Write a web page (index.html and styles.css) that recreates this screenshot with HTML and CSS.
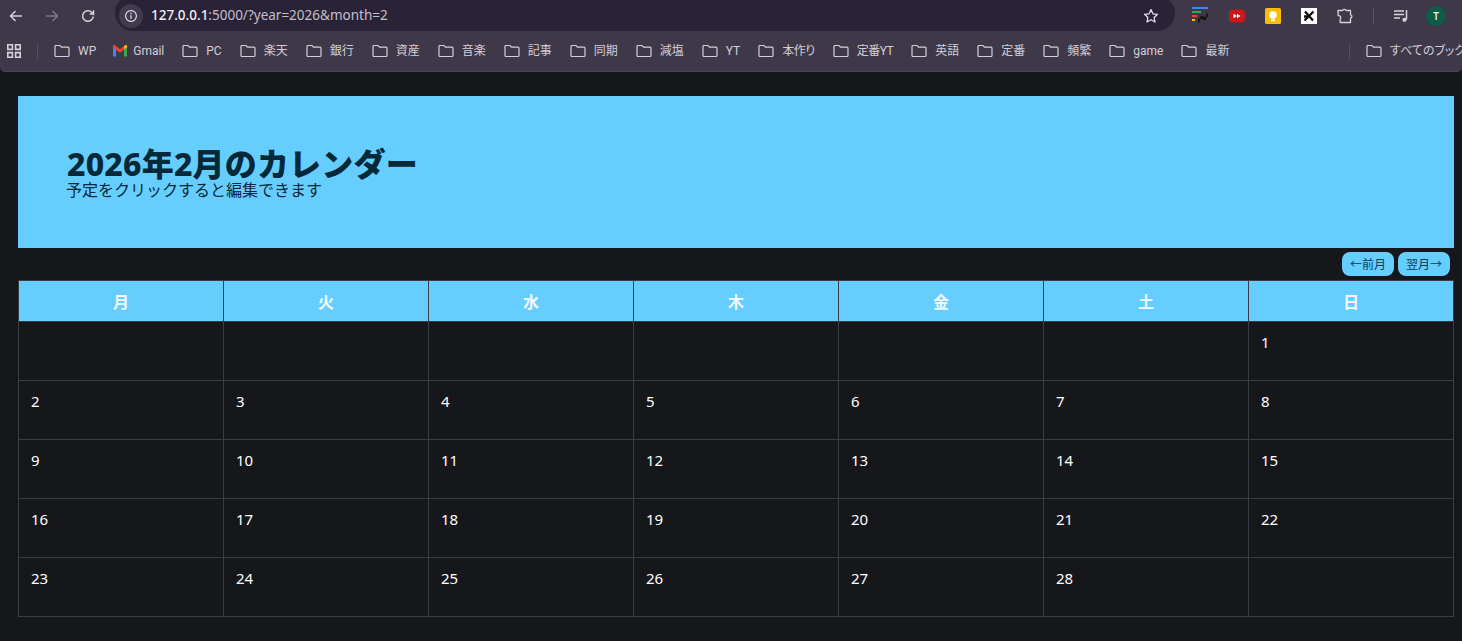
FILE: index.html
```html
<!DOCTYPE html>
<html lang="ja">
<head>
    <meta charset="UTF-8">
    <meta name="viewport" content="width=device-width, initial-scale=1.0">
    <title>カレンダー</title>
    <link rel="stylesheet" href="styles.css">
</head>
<body>

<svg class="defs" width="0" height="0">
    <symbol id="folder" viewBox="0 0 16 16">
        <path d="M1 3.5a1 1 0 0 1 1-1h4l1.5 1.7H14a1 1 0 0 1 1 1v7.3a1 1 0 0 1-1 1H2a1 1 0 0 1-1-1z" fill="none" stroke="currentColor" stroke-width="1.2"/>
    </symbol>
</svg>

<div class="browser">
    <div class="toolbar">
        <div class="nav-buttons">
            <svg class="nav-icon" viewBox="0 0 16 16"><path d="M14 8H3M7.5 3 2.5 8l5 5" fill="none" stroke="currentColor" stroke-width="1.5"/></svg>
            <svg class="nav-icon dim" viewBox="0 0 16 16"><path d="M2 8h11M8.5 3l5 5-5 5" fill="none" stroke="currentColor" stroke-width="1.5"/></svg>
            <svg class="nav-icon" viewBox="0 0 16 16"><path d="M13.2 8.5a5.3 5.3 0 1 1-1.4-4.1L13.5 6V2.2M13.5 6H9.8" fill="none" stroke="currentColor" stroke-width="1.5"/></svg>
        </div>
        <div class="omnibox">
            <span class="info-chip">
                <svg class="info-icon" viewBox="0 0 16 16">
                    <circle cx="8" cy="8" r="6.2" fill="none" stroke="currentColor" stroke-width="1.3"/>
                    <path d="M8 7v4.2M8 4.4v1.5" stroke="currentColor" stroke-width="1.4"/>
                </svg>
            </span>
            <span class="url"><b>127.0.0.1</b>:5000/?year=2026&amp;month=2</span>
            <svg class="star" viewBox="0 0 16 16"><path d="m8 1.600 1.900 4.200 4.600.5-3.400 3.100.9 4.600-4-2.300-4 2.300.9-4.600L1.500 6.300l4.600-.5z" fill="none" stroke="currentColor" stroke-width="1.300" stroke-linejoin="round"/></svg>
        </div>
        <div class="extensions">
            <svg class="ext ext-link" viewBox="0 0 18 18">
                <rect x="0" y="0" width="16" height="2" fill="#4285f4"/>
                <rect x="0" y="4" width="9" height="2" fill="#34a853"/>
                <rect x="0" y="8" width="5" height="2" fill="#ea4335"/>
                <rect x="0" y="12" width="3" height="2" fill="#fbbc04"/>
                <path d="M7.500 15.500a2.300 2.300 0 0 1-.2-3.200l2-2a2.300 2.300 0 0 1 3.300 3M14.500 6.500a2.300 2.300 0 0 1 .2 3.200l-2 2a2.300 2.300 0 0 1-3.300-3" fill="none" stroke="#111" stroke-width="1.400"/>
            </svg>
            <svg class="ext" viewBox="0 0 16 16">
                <rect x="0" y="1.500" width="16" height="13" rx="4" fill="#c9171e"/>
                <path d="M4.500 5.800v4.400L8 8zM8 5.800v4.400L11.500 8z" fill="#fff"/>
            </svg>
            <svg class="ext" viewBox="0 0 16 16">
                <rect width="16" height="16" rx="1.500" fill="#fbbc04"/>
                <circle cx="8" cy="7" r="3.800" fill="#fff"/>
                <rect x="6" y="11.500" width="4" height="1.600" fill="#fff"/>
            </svg>
            <svg class="ext" viewBox="0 0 16 16">
                <rect width="16" height="16" fill="#fff"/>
                <path d="M4 3.500 12 12.500M12.500 3.500 3.500 12.500M3 8.500h4" stroke="#111" stroke-width="2.400"/>
            </svg>
            <svg class="ext ext-puzzle" viewBox="0 0 16 16"><path d="M1 2.500h4.500a2 2 0 0 1 3.500 0h4.500v4.200a1.800 1.800 0 0 1 0 3.500v4.300H3.200v-3.500a2 2 0 0 0-2-3.300z" fill="none" stroke="currentColor" stroke-width="1.300" stroke-linejoin="round"/></svg>
            <span class="toolbar-sep"></span>
            <svg class="ext ext-media" viewBox="0 0 16 16"><path d="M1 3h10M1 6.500h10M1 10h6" stroke="currentColor" stroke-width="1.300"/><path d="M13.500 2v9.500" stroke="currentColor" stroke-width="1.500"/><circle cx="11.500" cy="11.800" r="2.100" fill="currentColor"/></svg>
            <span class="avatar">T</span>
        </div>
    </div>

    <div class="bookmarks">
        <svg class="apps" viewBox="0 0 14 14">
            <path d="M.8.8h4.600v4.600H.8zM8.600.8h4.600v4.600H8.600zM.8 8.600h4.600v4.600H.8zM8.600 8.600h4.600v4.600H8.600z" fill="none" stroke="currentColor" stroke-width="1.600"/>
        </svg>
        <span class="bar-sep"></span>
        <div class="bookmark-list">
            <a class="bookmark"><svg class="folder"><use href="#folder"/></svg>WP</a>
            <a class="bookmark bookmark-gmail">
                <svg class="folder" viewBox="0 0 16 16">
                    <path d="M1 13.500V4l3 2.200v7.300z" fill="#4285f4"/>
                    <path d="M15 13.500V4l-3 2.200v7.300z" fill="#34a853"/>
                    <path d="M1 4.500V3.200a1.200 1.200 0 0 1 1.900-1L8 6.200l5.100-4a1.200 1.200 0 0 1 1.900 1v1.300L8 9.800z" fill="#ea4335"/>
                    <path d="M12 6.200V3.400l1.100-1.200a1.200 1.200 0 0 1 1.900 1v1.300z" fill="#fbbc04"/>
                </svg>Gmail
            </a>
            <a class="bookmark"><svg class="folder"><use href="#folder"/></svg>PC</a>
            <a class="bookmark"><svg class="folder"><use href="#folder"/></svg>楽天</a>
            <a class="bookmark"><svg class="folder"><use href="#folder"/></svg>銀行</a>
            <a class="bookmark"><svg class="folder"><use href="#folder"/></svg>資産</a>
            <a class="bookmark"><svg class="folder"><use href="#folder"/></svg>音楽</a>
            <a class="bookmark"><svg class="folder"><use href="#folder"/></svg>記事</a>
            <a class="bookmark"><svg class="folder"><use href="#folder"/></svg>同期</a>
            <a class="bookmark"><svg class="folder"><use href="#folder"/></svg>減塩</a>
            <a class="bookmark"><svg class="folder"><use href="#folder"/></svg>YT</a>
            <a class="bookmark bookmark-tight"><svg class="folder"><use href="#folder"/></svg>本作り</a>
            <a class="bookmark bookmark-tight"><svg class="folder"><use href="#folder"/></svg>定番YT</a>
            <a class="bookmark"><svg class="folder"><use href="#folder"/></svg>英語</a>
            <a class="bookmark"><svg class="folder"><use href="#folder"/></svg>定番</a>
            <a class="bookmark"><svg class="folder"><use href="#folder"/></svg>頻繁</a>
            <a class="bookmark"><svg class="folder"><use href="#folder"/></svg>game</a>
            <a class="bookmark"><svg class="folder"><use href="#folder"/></svg>最新</a>
        </div>
        <span class="bar-sep all-sep"></span>
        <a class="bookmark all-bookmarks"><svg class="folder"><use href="#folder"/></svg>すべてのブックマーク</a>
    </div>
</div>

<main class="page">
    <section class="hero">
        <h1>2026年2月のカレンダー</h1>
        <p>予定をクリックすると編集できます</p>
    </section>

    <div class="month-nav">
        <a class="month-button">←前月</a>
        <a class="month-button">翌月→</a>
    </div>

    <table class="calendar">
        <thead>
            <tr><th>月</th><th>火</th><th>水</th><th>木</th><th>金</th><th>土</th><th>日</th></tr>
        </thead>
        <tbody>
            <tr><td></td><td></td><td></td><td></td><td></td><td></td><td>1</td></tr>
            <tr><td>2</td><td>3</td><td>4</td><td>5</td><td>6</td><td>7</td><td>8</td></tr>
            <tr><td>9</td><td>10</td><td>11</td><td>12</td><td>13</td><td>14</td><td>15</td></tr>
            <tr><td>16</td><td>17</td><td>18</td><td>19</td><td>20</td><td>21</td><td>22</td></tr>
            <tr><td>23</td><td>24</td><td>25</td><td>26</td><td>27</td><td>28</td><td></td></tr>
        </tbody>
    </table>
</main>

</body>
</html>
```

FILE: styles.css
```css
* {
    box-sizing: border-box;
}

html, body {
    height: 100%;
}

body {
    margin: 0;
    overflow: hidden;
    background-color: #16171b;
    color: #fff;
    font-family: "Noto Sans", "Noto Sans CJK JP", sans-serif;
}

.defs {
    position: absolute;
}

/* browser chrome */
.browser {
    height: 72px;
    background-color: #3f3849;
    border-bottom: 1px solid #4b4555;
    border-radius: 0 0 5px 5px;
}

.toolbar {
    height: 31px;
    display: flex;
    align-items: flex-end;
    overflow: hidden;
}

.nav-buttons {
    width: 115px;
    height: 31px;
    padding-left: 8px;
    display: flex;
    align-items: center;
    gap: 20px;
    color: #d6d2da;
    flex-shrink: 0;
}

.nav-icon {
    width: 16px;
    height: 16px;
}

.nav-icon.dim {
    color: #7d7785;
}

.omnibox {
    width: 1060px;
    height: 36px;
    flex-shrink: 0;
    display: flex;
    align-items: center;
    padding: 0 16px 0 4px;
    background-color: #2a2237;
    border-radius: 18px;
}

.info-chip {
    width: 24px;
    height: 24px;
    margin-top: 5px;
    border-radius: 50%;
    background-color: #423b4d;
    color: #e6e3ea;
    display: flex;
    align-items: center;
    justify-content: center;
}

.info-icon {
    width: 14px;
    height: 14px;
}

.url {
    margin: 3px 0 0 8px;
    flex: 1;
    font-size: 13.500px;
    color: #c3bfc9;
}

.url b {
    font-weight: 500;
    color: #f2f0f4;
}

.star {
    width: 16px;
    height: 16px;
    margin-top: 5px;
    color: #e3e0e6;
}

.extensions {
    height: 31px;
    flex: 1;
    display: flex;
    align-items: center;
    padding-left: 17px;
    color: #d6d2da;
}

.ext {
    width: 16px;
    height: 16px;
    margin-right: 20px;
    flex-shrink: 0;
}

.ext-link {
    width: 18px;
    height: 18px;
    margin-right: 19px;
}

.toolbar-sep {
    width: 1px;
    height: 16px;
    margin-right: 19px;
    background-color: #5c5666;
    flex-shrink: 0;
}

.ext-media {
    margin-right: 17px;
}

.avatar {
    width: 20px;
    height: 20px;
    border-radius: 50%;
    background-color: #0d5c46;
    color: #e8f3ef;
    font-size: 10px;
    font-weight: 600;
    display: flex;
    align-items: center;
    justify-content: center;
    flex-shrink: 0;
}

.bookmarks {
    height: 40px;
    display: flex;
    align-items: center;
    padding-left: 7px;
    color: #d3cfd8;
    font-family: Roboto, "Noto Sans CJK JP", sans-serif;
    overflow: hidden;
    white-space: nowrap;
}

.apps {
    width: 14px;
    height: 14px;
    color: #d6d2da;
    flex-shrink: 0;
}

.bar-sep {
    width: 1px;
    height: 16px;
    margin: 0 16px;
    background-color: #57515f;
    flex-shrink: 0;
}

.bookmark-list {
    width: 1295px;
    display: flex;
    gap: 18px;
    flex-shrink: 0;
}

.bookmark {
    display: flex;
    align-items: center;
    gap: 8px;
    font-size: 12px;
    line-height: 16px;
    font-feature-settings: "palt";
    flex-shrink: 0;
}

.bookmark-gmail {
    margin-left: -2px;
    gap: 5px;
}

.bookmark-tight {
    letter-spacing: -.5px;
}

.folder {
    width: 16px;
    height: 16px;
    flex-shrink: 0;
}

.all-sep {
    margin: 0 16px 0 0;
}

/* page */
.page {
    padding: 24px 8px 0 18px;
}

.hero {
    height: 152px;
    padding: 0 48px;
    display: flex;
    flex-direction: column;
    justify-content: center;
    background-color: #66ceff;
    color: #06293a;
}

.hero h1 {
    margin: -3px 0 0;
    padding-left: 1px;
    font-size: 32px;
    font-weight: 800;
    line-height: 38px;
    letter-spacing: .18px;
}

.hero p {
    margin: 0;
    font-size: 16px;
    line-height: 14px;
}

.month-nav {
    height: 32px;
    padding: 4px 4px 4px 0;
    display: flex;
    justify-content: flex-end;
    gap: 4px;
}

.month-button {
    width: 52px;
    height: 24px;
    display: flex;
    align-items: center;
    justify-content: center;
    border-radius: 8px;
    background-color: #66ceff;
    color: #0b3d55;
    font-size: 12px;
    font-feature-settings: "palt";
}

.calendar {
    width: 100%;
    table-layout: fixed;
    border-collapse: collapse;
}

.calendar th, .calendar td {
    border: 1px solid #3a3c44;
}

.calendar th {
    height: 41px;
    padding: 0;
    background-color: #66ceff;
    color: #f1f9fd;
    font-size: 16px;
    font-weight: 700;
}

.calendar td {
    height: 59px;
    padding: 9px 12px;
    vertical-align: top;
    font-size: 15px;
    line-height: 22px;
}
```
